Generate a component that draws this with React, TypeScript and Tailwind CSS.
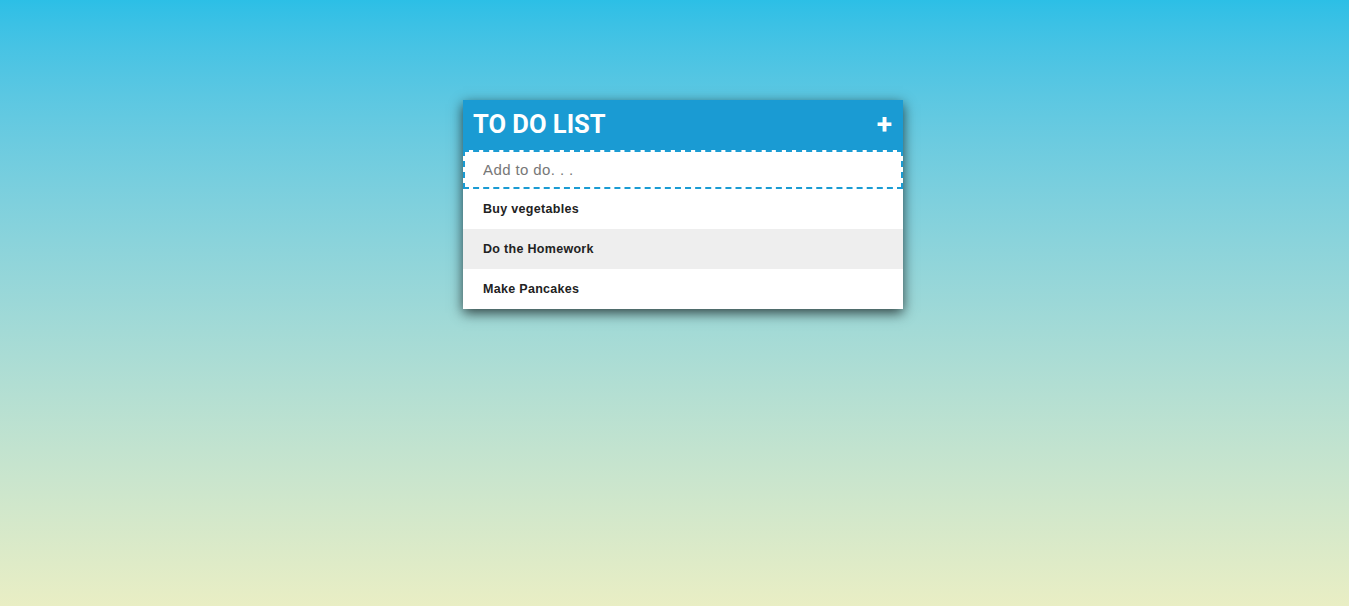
import { useState } from "react";

const TODOS = ["Buy vegetables", "Do the Homework", "Make Pancakes"];

export default function App() {
  const [value, setValue] = useState("");

  return (
    <div className="flex h-[606px] w-full justify-center bg-gradient-to-b from-[#2cbfe6] to-[#e9eec4] pl-[17px] pt-[100px]">
      <div className="h-fit w-[440px] bg-white shadow-[0_4px_12px_rgba(0,0,0,0.7)]">
        <div className="flex h-[50px] items-center justify-between bg-[#1a9bd3] pl-[10px] pr-[11px]">
          <h1 className="font-['Roboto',sans-serif] text-[25.5px] font-bold leading-none text-white">TO DO LIST</h1>
          <span className="font-['Roboto',sans-serif] text-[28px] font-bold leading-none text-white">+</span>
        </div>
        <input
          autoFocus
          value={value}
          onChange={(e) => setValue(e.target.value)}
          placeholder="Add to do. . ."
          className="block h-[39px] w-full border-2 border-dashed border-[#1a9bd3] bg-white pl-[18px] font-['Liberation_Sans',Arial,sans-serif] text-[15px] tracking-[0.4px] text-[#333] caret-black outline-none placeholder:text-[#777]"
        />
        <ul>
          {TODOS.map((t, i) => (
            <li
              key={t}
              className={`flex h-10 items-center pl-5 font-['Liberation_Sans',Arial,sans-serif] text-[12.5px] font-bold tracking-[0.3px] text-[#222] ${
                i % 2 === 1 ? "bg-[#eeeeee]" : "bg-white"
              }`}
            >
              {t}
            </li>
          ))}
        </ul>
      </div>
    </div>
  );
}
